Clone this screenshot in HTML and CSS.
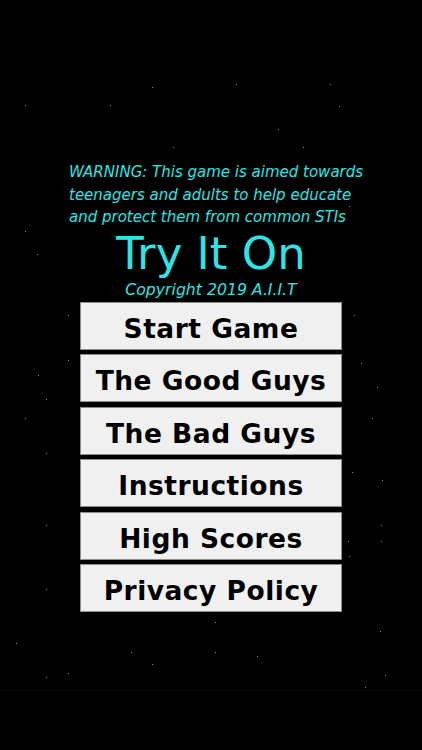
FILE: index.html
```html
<!DOCTYPE html>
<html>
<head>
<meta charset="utf-8">
<link rel="stylesheet" href="styles.css">
</head>
<body>
<div class="stars">
  <i style="left:25px;top:105px"></i><i style="left:110px;top:105px"></i><i style="left:152px;top:87px"></i><i style="left:236px;top:84px"></i><i style="left:330px;top:84px"></i><i style="left:339px;top:106px"></i><i style="left:278px;top:129px"></i><i style="left:173px;top:147px"></i><i style="left:303px;top:147px"></i>
  <i style="left:25px;top:231px"></i><i style="left:37px;top:254px"></i><i style="left:68px;top:315px"></i><i style="left:68px;top:360px"></i><i style="left:38px;top:375px"></i><i style="left:46px;top:399px"></i><i style="left:25px;top:418px"></i><i style="left:46px;top:453px"></i><i style="left:46px;top:525px"></i><i style="left:46px;top:589px"></i>
  <i style="left:349px;top:206px"></i><i style="left:354px;top:315px"></i><i style="left:361px;top:363px"></i><i style="left:377px;top:387px"></i><i style="left:372px;top:418px"></i><i style="left:352px;top:472px"></i><i style="left:382px;top:480px"></i><i style="left:381px;top:525px"></i><i style="left:348px;top:541px"></i><i style="left:381px;top:541px"></i><i style="left:349px;top:556px"></i>
  <i style="left:215px;top:622px"></i><i style="left:16px;top:643px"></i><i style="left:131px;top:652px"></i><i style="left:215px;top:652px"></i><i style="left:257px;top:656px"></i><i style="left:152px;top:664px"></i><i style="left:380px;top:631px"></i><i style="left:46px;top:677px"></i><i style="left:68px;top:673px"></i><i style="left:385px;top:675px"></i><i style="left:365px;top:687px"></i>
</div>
<main class="menu">
  <p class="warning">WARNING: This game is aimed towards<br>teenagers and adults to help educate<br>and protect them from common STIs</p>
  <h1 class="title">Try It On</h1>
  <p class="copyright">Copyright 2019 A.I.I.T</p>
  <div class="buttons">
    <button class="btn">Start Game</button>
    <button class="btn">The Good Guys</button>
    <button class="btn">The Bad Guys</button>
    <button class="btn">Instructions</button>
    <button class="btn">High Scores</button>
    <button class="btn">Privacy Policy</button>
  </div>
</main>
<div class="bottomline"></div>
</body>
</html>
```

FILE: styles.css
```css
html, body {
  margin: 0;
  padding: 0;
  background: #000;
  width: 422px;
  height: 750px;
  overflow: hidden;
}
body {
  position: relative;
  font-family: "DejaVu Sans", "Noto Sans", sans-serif;
}
.stars {
  position: absolute;
  inset: 0;
}
.stars i {
  position: absolute;
  width: 1px;
  height: 1px;
  background: #8a8a8a;
}
.menu {
  position: relative;
  display: flex;
  flex-direction: column;
  align-items: center;
  padding-top: 161px;
}
.warning {
  margin: 0;
  width: 292px;
  padding-left: 8px;
  font-style: italic;
  font-size: 15px;
  line-height: 22.5px;
  color: #2fe4e4;
  white-space: nowrap;
}
.title {
  margin: 3px 0 0;
  font-weight: normal;
  font-size: 45px;
  line-height: 44px;
  color: #2fe4e4;
}
.copyright {
  margin: 4px 0 0;
  font-style: italic;
  font-size: 15.7px;
  line-height: 19px;
  color: #2fe4e4;
}
.buttons {
  margin-top: 3px;
  display: flex;
  flex-direction: column;
  gap: 4.6px;
}
.btn {
  width: 262px;
  height: 48px;
  box-sizing: border-box;
  border: 1px solid #8c8c8c;
  background: #f0f0f0;
  font-family: inherit;
  font-size: 26.5px;
  font-weight: bold;
  color: #000;
  padding: 5px 0 0;
  letter-spacing: 0.5px;
}
.bottomline {
  position: absolute;
  left: 0;
  right: 0;
  top: 690px;
  height: 1px;
  background: #0d0404;
}
```
